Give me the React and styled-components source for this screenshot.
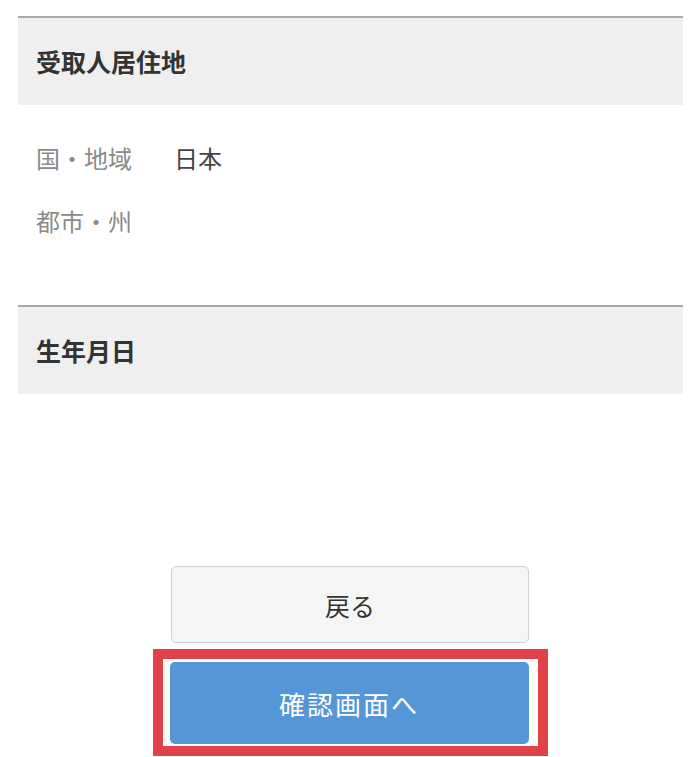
import styled, { createGlobalStyle } from "styled-components";

const GlobalStyle = createGlobalStyle`
  body {
    margin: 0;
    background: #ffffff;
    font-family: "Noto Sans CJK JP", "Noto Sans", sans-serif;
  }
`;

const Page = styled.div`
  width: 665px;
  padding: 16px 0 0 18px;
`;

const Section = styled.section`
  border-top: 2px solid #a9a9a9;
`;

const SectionHeader = styled.h2`
  display: flex;
  align-items: center;
  height: 87px;
  margin: 0;
  padding-left: 18px;
  background: #efefef;
  color: #333333;
  font-size: 25px;
  font-weight: 700;
  line-height: 1;
`;

const Rows = styled.dl`
  margin: 0;
  padding: 21px 0 53px;
`;

const Row = styled.div`
  display: flex;
  height: 63px;
  align-items: center;
  padding-left: 18px;
`;

const Label = styled.dt`
  width: 138px;
  color: #8a8a8a;
  font-size: 24px;
  line-height: 1;
`;

const Value = styled.dd`
  margin: 0;
  color: #444444;
  font-size: 24px;
  line-height: 1;
`;

const Actions = styled.div`
  display: flex;
  flex-direction: column;
  align-items: center;
  width: 700px;
  margin: 172px 0 0 -18px;
`;

const Button = styled.button`
  display: flex;
  align-items: center;
  justify-content: center;
  width: ${(p) => (p.primary ? "359px" : "358px")};
  height: ${(p) => (p.primary ? "82px" : "77px")};
  padding: 0;
  border: ${(p) => (p.primary ? "none" : "1px solid #d0d0d0")};
  border-radius: 5px;
  background: ${(p) => (p.primary ? "#5597d6" : "#f5f5f5")};
  color: ${(p) => (p.primary ? "#ffffff" : "#333333")};
  font-family: inherit;
  font-size: ${(p) => (p.primary ? "26px" : "25px")};
  letter-spacing: ${(p) => (p.primary ? "2px" : "0")};
  cursor: pointer;
`;

const Highlight = styled.div`
  box-sizing: border-box;
  width: 395px;
  height: 107px;
  margin-top: 6px;
  padding: 3px 9px 2px 7px;
  border: 10px solid #e1424a;
  background: #ffffff;
`;

const fields = [
  { label: "国・地域", value: "日本" },
  { label: "都市・州", value: "" },
];

const App = () => (
  <>
    <GlobalStyle />
    <Page>
      <Section>
        <SectionHeader>受取人居住地</SectionHeader>
        <Rows>
          {fields.map((f) => (
            <Row key={f.label}>
              <Label>{f.label}</Label>
              <Value>{f.value}</Value>
            </Row>
          ))}
        </Rows>
      </Section>
      <Section>
        <SectionHeader>生年月日</SectionHeader>
      </Section>
      <Actions>
        <Button type="button">戻る</Button>
        <Highlight>
          <Button primary type="submit">
            確認画面へ
          </Button>
        </Highlight>
      </Actions>
    </Page>
  </>
);

export default App;
